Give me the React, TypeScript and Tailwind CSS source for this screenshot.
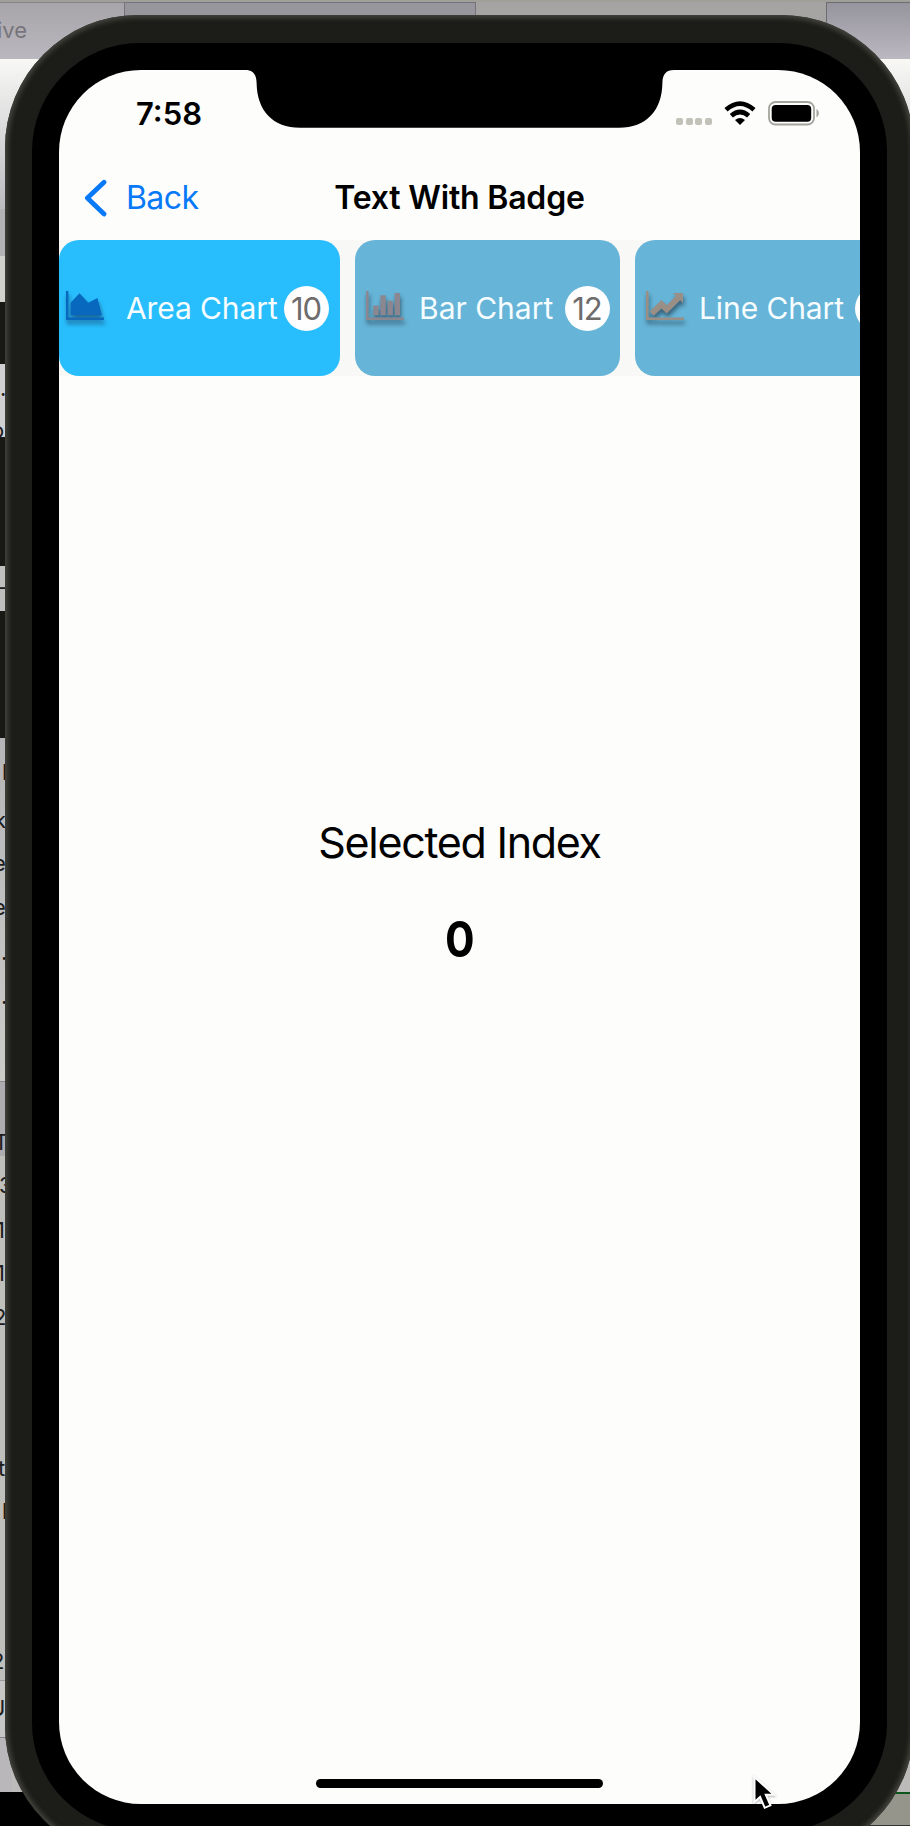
import React from "react";

type Fragment = { text: string; top: number; left: number };

const fragments: Fragment[] = [
  { text: ".", top: 373, left: 0 },
  { text: "o", top: 415, left: -9 },
  { text: "-", top: 572, left: -3 },
  { text: "l", top: 757, left: 2 },
  { text: "k", top: 805, left: -6 },
  { text: "e", top: 848, left: -7 },
  { text: "e", top: 892, left: -7 },
  { text: ".", top: 937, left: 1 },
  { text: ".", top: 981, left: 1 },
  { text: "T", top: 1127, left: -6 },
  { text: "3", top: 1170, left: -1 },
  { text: "1", top: 1215, left: -4 },
  { text: "1", top: 1258, left: -4 },
  { text: "2", top: 1302, left: -7 },
  { text: "t", top: 1453, left: -2 },
  { text: "l", top: 1496, left: 2 },
  { text: "2", top: 1646, left: -9 },
  { text: "U", top: 1693, left: -11 },
];

function Desktop() {
  return (
    <div className="absolute inset-0 bg-[#bcbbb9]">
      <div className="flex h-[59px] border-t-2 border-[#a09f98] bg-[#b1afb4]">
        <div className="w-[124px] border-t border-[#85838c] bg-linear-to-b from-[#a7a5aa] to-[#bab7be]" />
        <div className="w-[352px] border-t border-r border-l border-[#74727d] bg-[#98969d]" />
        <div className="grow bg-[#a6a4a2]" />
        <div className="w-[84px] border-t border-l border-[#6d6b74] bg-linear-to-b from-[#96949c] to-[#bbb8c1]" />
      </div>
      <div className="h-[150px] bg-linear-to-b from-[#f8f8f5] to-[#bcbbc0]" />
      <span className="absolute top-[15px] -left-[3px] text-[22px] leading-[30px] text-[#77757b]">ive</span>
      <div className="absolute top-[209px] left-0 flex w-3 flex-col">
        <div className="h-[47px] bg-[#b3b2b5]" />
        <div className="h-[46px] bg-[#d2d2cd]" />
        <div className="h-[62px] bg-[#181815]" />
        <div className="h-[73px] bg-[#d0cfd2]" />
        <div className="h-[129px] bg-[#181815]" />
        <div className="h-[45px] bg-[#c0bfc0]" />
        <div className="h-[127px] bg-[#181815]" />
        <div className="h-[343px] bg-linear-to-b from-[#b6b5b8] to-[#cbcbc8]" />
        <div className="h-[75px] border-t border-[#8e8c90] bg-[#aeacb0]" />
        <div className="h-[524px] bg-[#bfbfbb]" />
        <div className="h-[57px] border-t border-[#9b9a9c] bg-[#c7c6c6]" />
        <div className="h-[56px] border-t border-[#85838a] bg-[#bab7ba]" />
      </div>
      {fragments.map((f, i) => (
        <span
          key={i}
          className="absolute text-[22px] leading-[30px] text-[#1c1c1c]"
          style={{ top: f.top, left: f.left }}
        >
          {f.text}
        </span>
      ))}
      <div className="absolute bottom-0 left-0 h-[34px] w-[300px] bg-black" />
      <div className="absolute right-0 bottom-0 h-[34px] w-[60px] border-t-2 border-b border-t-[#0c551b] border-b-[#333] bg-[#96958b]" />
    </div>
  );
}

function AreaIcon() {
  return (
    <svg width="40" height="36" viewBox="0 0 40 36" className="shrink-0 overflow-visible fill-[#0868bd] drop-shadow-[1px_4px_2px_rgba(20,60,100,0.65)]">
      <path d="M1 1h2.4v26.5H39V30H1zM5.7 25.2V12.5L14.6 3.2l8.6 9.5 9.3-4.6 4.3 17.1z" />
    </svg>
  );
}

function BarIcon() {
  return (
    <svg width="40" height="36" viewBox="0 0 40 36" className="shrink-0 overflow-visible fill-[#8b8791] drop-shadow-[1px_4px_2px_rgba(40,70,90,0.75)]">
      <path d="M1 1h2.6v26.5H39V30H1zM8.3 15.5h5.4v9.7H8.3zM15.4 5.3h5.4v19.9h-5.4zM22.5 10.8h5.4v14.4h-5.4zM29.6 3H35v22.2h-5.4z" />
    </svg>
  );
}

function LineIcon() {
  return (
    <svg width="40" height="36" viewBox="0 0 40 36" className="shrink-0 overflow-visible fill-[#9a8f86] drop-shadow-[1px_4px_2px_rgba(40,70,90,0.75)]">
      <path d="M1 1h2.6v26.5H39V30H1zM28 3h10v10l-2.8-2.8-13.5 13.3-5.2-5.1-7.8 7.4-4.2-4.3L16.5 10l5.2 5.2 9.2-9.2z" />
    </svg>
  );
}

function Badge({ value }: { value: number }) {
  return (
    <span className="flex size-[45px] shrink-0 items-center justify-center rounded-full bg-[#fefefe] pr-px text-[31px] tracking-[-1px] text-[#6d6b6b]">
      {value}
    </span>
  );
}

function Tabs() {
  return (
    <div className="flex h-[136px] gap-[15px] overflow-hidden bg-[#f8f8f7] text-[30px] leading-none text-[#f7fdff]">
      <div className="flex w-[281px] shrink-0 items-center rounded-[20px] bg-[#28befd] pl-[6px]">
        <AreaIcon />
        <span className="ml-[21px] w-[158px] shrink-0 whitespace-nowrap tracking-[-0.1px]">Area Chart</span>
        <Badge value={10} />
      </div>
      <div className="flex w-[265px] shrink-0 items-center rounded-[20px] bg-[#66b4d7] pl-[10px]">
        <BarIcon />
        <span className="ml-[14px] w-[146px] shrink-0 whitespace-nowrap">Bar Chart</span>
        <Badge value={12} />
      </div>
      <div className="flex w-[280px] shrink-0 items-center rounded-[20px] bg-[#66b4d7] pl-[10px]">
        <LineIcon />
        <span className="ml-[14px] w-[156px] shrink-0 whitespace-nowrap tracking-[-0.1px]">Line Chart</span>
        <Badge value={8} />
      </div>
    </div>
  );
}

function StatusBar() {
  return (
    <header className="flex h-[88px] justify-between">
      <span className="mt-[29px] ml-[77px] text-[31px] leading-[30px] font-semibold">7:58</span>
      <div className="mt-[30px] mr-[40px] flex h-[26px]">
        <div className="mt-[18px] flex gap-[2.6px]">
          {[0, 1, 2, 3].map((n) => (
            <i key={n} className="block size-[7px] rounded-[2px] bg-[#c3c2b8]" />
          ))}
        </div>
        <svg width="32" height="26" viewBox="0 0 32 26" className="ml-[12px]" fill="none" stroke="#000" strokeWidth="4.7">
          <path d="M2 9.8Q16-2.6 30 9.8M7.3 15.8Q16 8.2 24.7 15.8" />
          <path d="M11 20Q16 16 21 20L16 25z" fill="#000" stroke="none" />
        </svg>
        <svg width="52" height="26" viewBox="0 0 52 26" className="ml-[12px]">
          <rect x="1" y="2" width="45" height="22.5" rx="6.5" fill="none" stroke="#a5a49c" strokeWidth="1.8" />
          <rect x="3.7" y="5" width="39.5" height="16.8" rx="4" fill="#000" />
          <path d="M48.5 9c3 1.3 3 7 0 8.3z" fill="#a5a49c" />
        </svg>
      </div>
    </header>
  );
}

function Navigation() {
  return (
    <nav className="relative flex h-[82px] items-center pb-[2px] text-[32px] leading-[40px]">
      <svg width="23" height="38" viewBox="0 0 23 38" fill="none" stroke="#0679f8" strokeWidth="4.8" strokeLinecap="round" strokeLinejoin="round" className="ml-[25px]">
        <path d="M20 3.2L3.4 19l16.6 16" />
      </svg>
      <span className="ml-[19px] tracking-[-0.6px] text-[#0679f8]">Back</span>
      <h1 className="absolute inset-x-0 text-center font-semibold tracking-[-0.2px]">Text With Badge</h1>
    </nav>
  );
}

function Notch() {
  return (
    <svg width="431" height="60" viewBox="0 0 431 60" className="absolute -top-px left-[185px]">
      <path d="M1 0V1C9 1 12.3 5 12.6 14C13 42 29 58.7 56 58.7H375C402 58.7 418 42 418.4 14C418.7 5 422 1 430 1V0z" />
    </svg>
  );
}

export default function App() {
  return (
    <div className="relative h-[1826px] w-[910px] overflow-hidden font-['Inter',sans-serif] text-black">
      <Desktop />
      <div className="relative mt-[15px] ml-[5px] h-[1844px] w-[909px] rounded-[133px] bg-[#1c1c18] p-[27px] pt-[28px] shadow-[inset_0_0_5px_3px_#44443e]">
        <div className="h-[1788px] rounded-[108px] bg-black p-[27px]">
          <main className="relative flex h-[1734px] flex-col overflow-hidden rounded-[82px] bg-[#fdfdfc]">
            <Notch />
            <StatusBar />
            <Navigation />
            <Tabs />
            <section className="flex grow flex-col items-center pt-[441px]">
              <p className="text-[43px] leading-[50px] tracking-[-1.3px]">Selected Index</p>
              <p className="mt-[42px] scale-x-[0.88] text-[50px] leading-[60px] font-bold">0</p>
            </section>
            <div className="mx-auto mb-[16px] h-[9px] w-[287px] rounded-full bg-black" />
          </main>
        </div>
      </div>
      <svg width="24" height="36" viewBox="0 0 24 36" className="absolute top-[1775px] left-[753px] drop-shadow-[0_1px_1px_rgba(0,0,0,0.3)]">
        <path d="M1.5 2v25l5.6-5 4.6 10.8 5.8-2.5-4.7-10.5H21z" fill="#000" stroke="#fff" strokeWidth="2" />
      </svg>
    </div>
  );
}
